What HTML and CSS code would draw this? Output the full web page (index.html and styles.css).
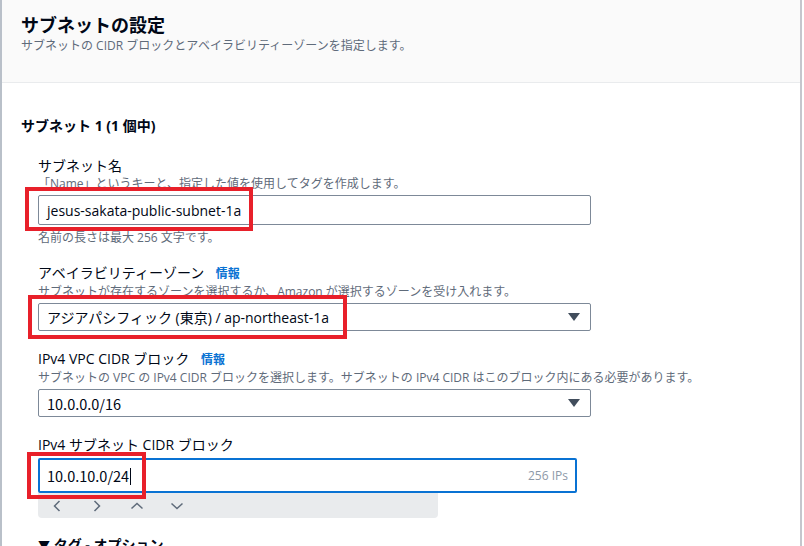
FILE: index.html
```html
<html lang="ja">
<head>
    <meta charset="UTF-8">
    <title>サブネットの設定</title>
    <link rel="stylesheet" href="styles.css">
</head>
<body>
    <div class="panel">
        <div class="panel-header">
            <div class="panel-title">サブネットの設定</div>
            <div class="panel-desc">サブネットの CIDR ブロックとアベイラビリティーゾーンを指定します。</div>
        </div>
        <div class="panel-body">
            <div class="group-title">サブネット 1 (1 個中)</div>

            <div class="field field-name">
                <div class="label">サブネット名</div>
                <div class="desc">「Name」というキーと、指定した値を使用してタグを作成します。</div>
                <div class="input">jesus-sakata-public-subnet-1a</div>
                <div class="hint">名前の長さは最大 256 文字です。</div>
                <div class="mark mark-name"></div>
            </div>

            <div class="field field-az">
                <div class="label">アベイラビリティーゾーン <a class="info">情報</a></div>
                <div class="desc">サブネットが存在するゾーンを選択するか、Amazon が選択するゾーンを受け入れます。</div>
                <div class="select">
                    <span>アジアパシフィック (東京) / ap-northeast-1a</span>
                    <svg class="caret-down" width="12" height="8" viewBox="0 0 12 8"><path d="M0 0 H12 L6 8 Z" fill="#414d5c"/></svg>
                </div>
                <div class="mark mark-az"></div>
            </div>

            <div class="field field-vpc">
                <div class="label">IPv4 VPC CIDR ブロック <a class="info">情報</a></div>
                <div class="desc">サブネットの VPC の IPv4 CIDR ブロックを選択します。サブネットの IPv4 CIDR はこのブロック内にある必要があります。</div>
                <div class="select">
                    <span class="num">10.0.0.0/16</span>
                    <svg class="caret-down" width="12" height="8" viewBox="0 0 12 8"><path d="M0 0 H12 L6 8 Z" fill="#414d5c"/></svg>
                </div>
            </div>

            <div class="field field-cidr">
                <div class="label">IPv4 サブネット CIDR ブロック</div>
                <div class="input input-focus">
                    <span class="num">10.0.10.0/24<span class="cursor"></span></span>
                    <span class="count">256 IPs</span>
                </div>
                <div class="stepper">
                    <svg width="14" height="14" viewBox="0 0 14 14"><path d="M9.5 2 L4.5 7 L9.5 12" fill="none" stroke="#5f6b7a" stroke-width="1.5"/></svg>
                    <svg width="14" height="14" viewBox="0 0 14 14"><path d="M4.5 2 L9.5 7 L4.5 12" fill="none" stroke="#5f6b7a" stroke-width="1.5"/></svg>
                    <svg width="14" height="14" viewBox="0 0 14 14"><path d="M1.5 9.5 L7 4.5 L12.5 9.5" fill="none" stroke="#5f6b7a" stroke-width="1.5"/></svg>
                    <svg width="14" height="14" viewBox="0 0 14 14"><path d="M1.5 4.5 L7 9.5 L12.5 4.5" fill="none" stroke="#5f6b7a" stroke-width="1.5"/></svg>
                </div>
                <div class="mark mark-cidr"></div>
            </div>

            <div class="expander">
                <span class="expander-icon">▼</span> タグ - オプション
            </div>
        </div>
    </div>
</body>
</html>
```

FILE: styles.css
```css
body {
    margin: 0;
    background-color: #ffffff;
    font-family: "Open Sans", "Noto Sans CJK JP", sans-serif;
    color: #000716;
}
.panel {
    width: 798px;
    height: 546px;
    overflow: hidden;
    border-left: 2px solid #b9c0c9;
    border-right: 2px solid #c6c6cd;
}
.panel-header {
    height: 83px;
    box-sizing: border-box;
    padding: 12px 19px 0;
    background-color: #fafafa;
    border-bottom: 1px solid #e9ebed;
}
.panel-title {
    font-size: 18px;
    font-weight: bold;
    line-height: 26px;
}
.panel-desc {
    font-size: 12px;
    line-height: 16px;
    color: #5f6b7a;
}
.panel-body {
    padding: 33px 19px 0;
}
.group-title {
    font-size: 14px;
    font-weight: bold;
    line-height: 20px;
}
.field {
    position: relative;
    margin: 17px 0 0 17px;
}
.field-name {
    margin-top: 19px;
}
.field-az {
    margin-top: 16px;
}
.label {
    font-size: 14px;
    line-height: 21px;
}
.info {
    margin-left: 8px;
    font-size: 12px;
    font-weight: bold;
    color: #0972d3;
}
.desc {
    font-size: 12px;
    line-height: 16px;
    color: #5f6b7a;
    margin-bottom: 3px;
    white-space: nowrap;
}
.hint {
    font-size: 12px;
    line-height: 16px;
    color: #5f6b7a;
    margin-top: 5px;
}
.input,
.select {
    box-sizing: border-box;
    width: 553px;
    height: 30px;
    padding: 0 8px;
    display: flex;
    align-items: center;
    justify-content: space-between;
    border: 1px solid #7d8998;
    border-radius: 2px;
    font-size: 14px;
}
.select {
    height: 28px;
    padding-right: 10px;
}
.num {
    font-family: "Noto Sans CJK JP", "Open Sans", sans-serif;
    font-size: 14.5px;
}
.input-focus {
    width: 539px;
    height: 35px;
    margin-top: 3px;
    border: 2px solid #0972d3;
    padding: 0 7px;
}
.cursor {
    display: inline-block;
    width: 1px;
    height: 17px;
    margin-left: 1px;
    vertical-align: -3px;
    background-color: #000716;
}
.count {
    font-size: 12px;
    color: #8d99a8;
}
.stepper {
    width: 400px;
    height: 25px;
    display: flex;
    align-items: center;
    gap: 26px;
    padding-left: 12px;
    box-sizing: border-box;
    background-color: #e9ebed;
    border-radius: 0 0 4px 4px;
}
.mark {
    position: absolute;
    border: 4px solid #e8202a;
}
.mark-name {
    left: -13px;
    top: 32px;
    width: 220px;
    height: 36px;
}
.mark-az {
    left: -10px;
    top: 33px;
    width: 311px;
    height: 36px;
}
.mark-cidr {
    left: -11px;
    top: 18px;
    width: 111px;
    height: 39px;
}
.expander {
    margin: 17px 0 0 17px;
    font-size: 14px;
    font-weight: bold;
    line-height: 20px;
}
.expander-icon {
    font-size: 12px;
}
```
